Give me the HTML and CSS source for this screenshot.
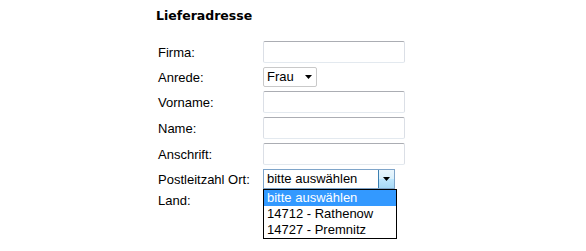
FILE: index.html
```html
<!DOCTYPE html>
<html lang="de">
<head>
<meta charset="utf-8">
<title>Lieferadresse</title>
<link rel="stylesheet" href="styles.css">
</head>
<body>
<div class="page">
  <h2 class="title">Lieferadresse</h2>
  <div class="form">
    <div class="label">Firma:</div>
    <div class="field"><span class="textbox"></span></div>

    <div class="label">Anrede:</div>
    <div class="field">
      <span class="combo combo-small">
        <span class="combo-text">Frau</span>
        <svg class="arrow" width="7" height="4" viewBox="0 0 7 4"><path d="M0 0H7L3.5 4Z" fill="#000"/></svg>
      </span>
    </div>

    <div class="label">Vorname:</div>
    <div class="field"><span class="textbox"></span></div>

    <div class="label">Name:</div>
    <div class="field"><span class="textbox"></span></div>

    <div class="label">Anschrift:</div>
    <div class="field"><span class="textbox"></span></div>

    <div class="label">Postleitzahl Ort:</div>
    <div class="field">
      <span class="combo combo-open">
        <span class="combo-text">bitte auswählen</span>
        <span class="combo-btn"><svg width="7" height="4" viewBox="0 0 7 4"><path d="M0 0H7L3.5 4Z" fill="#000"/></svg></span>
        <span class="listbox">
          <span class="option selected">bitte auswählen</span>
          <span class="option">14712 - Rathenow</span>
          <span class="option">14727 - Premnitz</span>
        </span>
      </span>
    </div>

    <div class="label">Land:</div>
    <div class="field"></div>
  </div>
</div>
</body>
</html>
```

FILE: styles.css
```css
html, body {
  margin: 0;
  padding: 0;
  background: #fff;
}

body {
  min-height: 251px;
}

.page {
  margin-left: 156px;
  padding-top: 8px;
  min-height: 243px;
  font-family: "Liberation Sans", Arial, sans-serif;
  font-size: 13px;
  color: #000;
}

.title {
  margin: 0 0 16px 0;
  font-family: "DejaVu Sans", Verdana, sans-serif;
  font-weight: bold;
  font-size: 12.5px;
  line-height: 15px;
  color: #000;
}

.form {
  display: grid;
  grid-template-columns: 105px auto;
  align-items: center;
}

.label,
.field {
  padding: 2px;
  line-height: 15px;
}

.field {
  display: flex;
  align-items: center;
}

.textbox {
  display: block;
  box-sizing: border-box;
  width: 142px;
  height: 22px;
  border: 1px solid #dbdfe6;
  border-top-color: #abadb3;
  border-bottom-color: #e3e9ef;
  border-radius: 2px;
  background: #fff;
}

.combo {
  position: relative;
  display: flex;
  align-items: center;
  box-sizing: border-box;
  height: 20px;
  border: 1px solid #c9c9c9;
  border-radius: 2px;
  background: #fff;
  line-height: 16px;
}

.combo-text {
  padding-left: 3px;
  white-space: nowrap;
}

.combo-small {
  width: 54px;
}

.combo-small .arrow {
  margin-left: auto;
  margin-right: 4px;
}

.combo-open {
  width: 132px;
  border-color: #7ea4c9;
  border-radius: 0;
}

.combo-btn {
  margin-left: auto;
  align-self: stretch;
  width: 15px;
  display: flex;
  align-items: center;
  justify-content: center;
  border-left: 1px solid #3c7fb1;
  background: linear-gradient(#eaf6fd, #d9f0fc 50%, #bee6fd 51%, #a7d9f5);
}

.listbox {
  position: absolute;
  left: -1px;
  top: 19px;
  width: 134px;
  box-sizing: border-box;
  border: 1px solid #000;
  background: #fff;
  display: flex;
  flex-direction: column;
  z-index: 2;
}

.option {
  display: block;
  padding-left: 3px;
  line-height: 16px;
  white-space: nowrap;
}

.option.selected {
  background: #3399ff;
  color: #fff;
}
```
